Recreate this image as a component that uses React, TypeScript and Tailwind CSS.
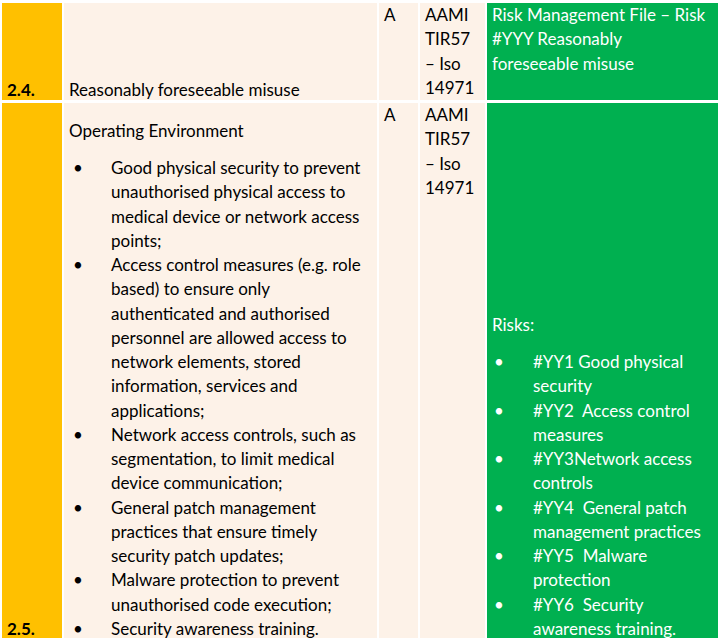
const ORANGE = 'bg-[#FFC000]';
const BEIGE = 'bg-[#FDF2E8]';
const GREEN = 'bg-[#00B050]';

const envItems: string[][] = [
  ['Good physical security to prevent', 'unauthorised physical access to', 'medical device or network access', 'points;'],
  ['Access control measures (e.g. role', 'based) to ensure only', 'authenticated and authorised', 'personnel are allowed access to', 'network elements, stored', 'information, services and', 'applications;'],
  ['Network access controls, such as', 'segmentation, to limit medical', 'device communication;'],
  ['General patch management', 'practices that ensure timely', 'security patch updates;'],
  ['Malware protection to prevent', 'unauthorised code execution;'],
  ['Security awareness training.'],
];

const riskItems: string[][] = [
  ['#YY1 Good physical', 'security'],
  ['#YY2  Access control', 'measures'],
  ['#YY3Network access', 'controls'],
  ['#YY4  General patch', 'management practices'],
  ['#YY5  Malware', 'protection'],
  ['#YY6  Security', 'awareness training.'],
];

function Lines({ lines }: { lines: string[] }) {
  return (
    <>
      {lines.map((l, i) => (
        <div key={i} className="whitespace-pre">{l}</div>
      ))}
    </>
  );
}

function BulletList({ items, bullet }: { items: string[][]; bullet: string }) {
  return (
    <ul className="flex flex-col">
      {items.map((lines, i) => (
        <li key={i} className="flex">
          <span className={`${bullet} shrink-0`}>•</span>
          <div>
            <Lines lines={lines} />
          </div>
        </li>
      ))}
    </ul>
  );
}

export default function App() {
  return (
    <div
      className="w-[720px] h-[643px] bg-white pt-[3px] pl-[2px] text-[17px] leading-[24.25px] text-black"
      style={{ fontFamily: 'Lato, "Open Sans", sans-serif' }}
    >
      <div className="grid grid-cols-[60px_313px_39px_65px_231px] grid-rows-[97px_535px] gap-x-[2px] gap-y-[3px]">
        {/* row 2.4 */}
        <div className={`${ORANGE} flex items-end px-[5px]`}>
          <span className="font-bold -mb-[2px]">2.4.</span>
        </div>
        <div className={`${BEIGE} flex items-end px-[5px]`}>
          <span className="-mb-[2px]">Reasonably foreseeable misuse</span>
        </div>
        <div className={`${BEIGE} px-[5px]`}>A</div>
        <div className={`${BEIGE} px-[5px]`}>
          <Lines lines={['AAMI', 'TIR57', '– Iso', '14971']} />
        </div>
        <div className={`${GREEN} px-[5px] text-white`}>
          <Lines lines={['Risk Management File – Risk', '#YYY Reasonably', 'foreseeable misuse']} />
        </div>

        {/* row 2.5 */}
        <div className={`${ORANGE} flex items-end px-[5px]`}>
          <span className="font-bold -mb-[3px]">2.5.</span>
        </div>
        <div className={`${BEIGE} flex flex-col justify-end pl-[5px]`}>
          <div className="-mb-[3px]">
            <p className="mb-[13px]">Operating Environment</p>
            <BulletList items={envItems} bullet="pl-[4px] w-[42px]" />
          </div>
        </div>
        <div className={`${BEIGE} px-[5px]`}>A</div>
        <div className={`${BEIGE} px-[5px]`}>
          <Lines lines={['AAMI', 'TIR57', '– Iso', '14971']} />
        </div>
        <div className={`${GREEN} flex flex-col justify-end pl-[5px] text-white`}>
          <div className="-mb-[3px]">
            <p className="mb-[13px]">Risks:</p>
            <BulletList items={riskItems} bullet="pl-[2px] w-[41px]" />
          </div>
        </div>
      </div>
    </div>
  );
}
